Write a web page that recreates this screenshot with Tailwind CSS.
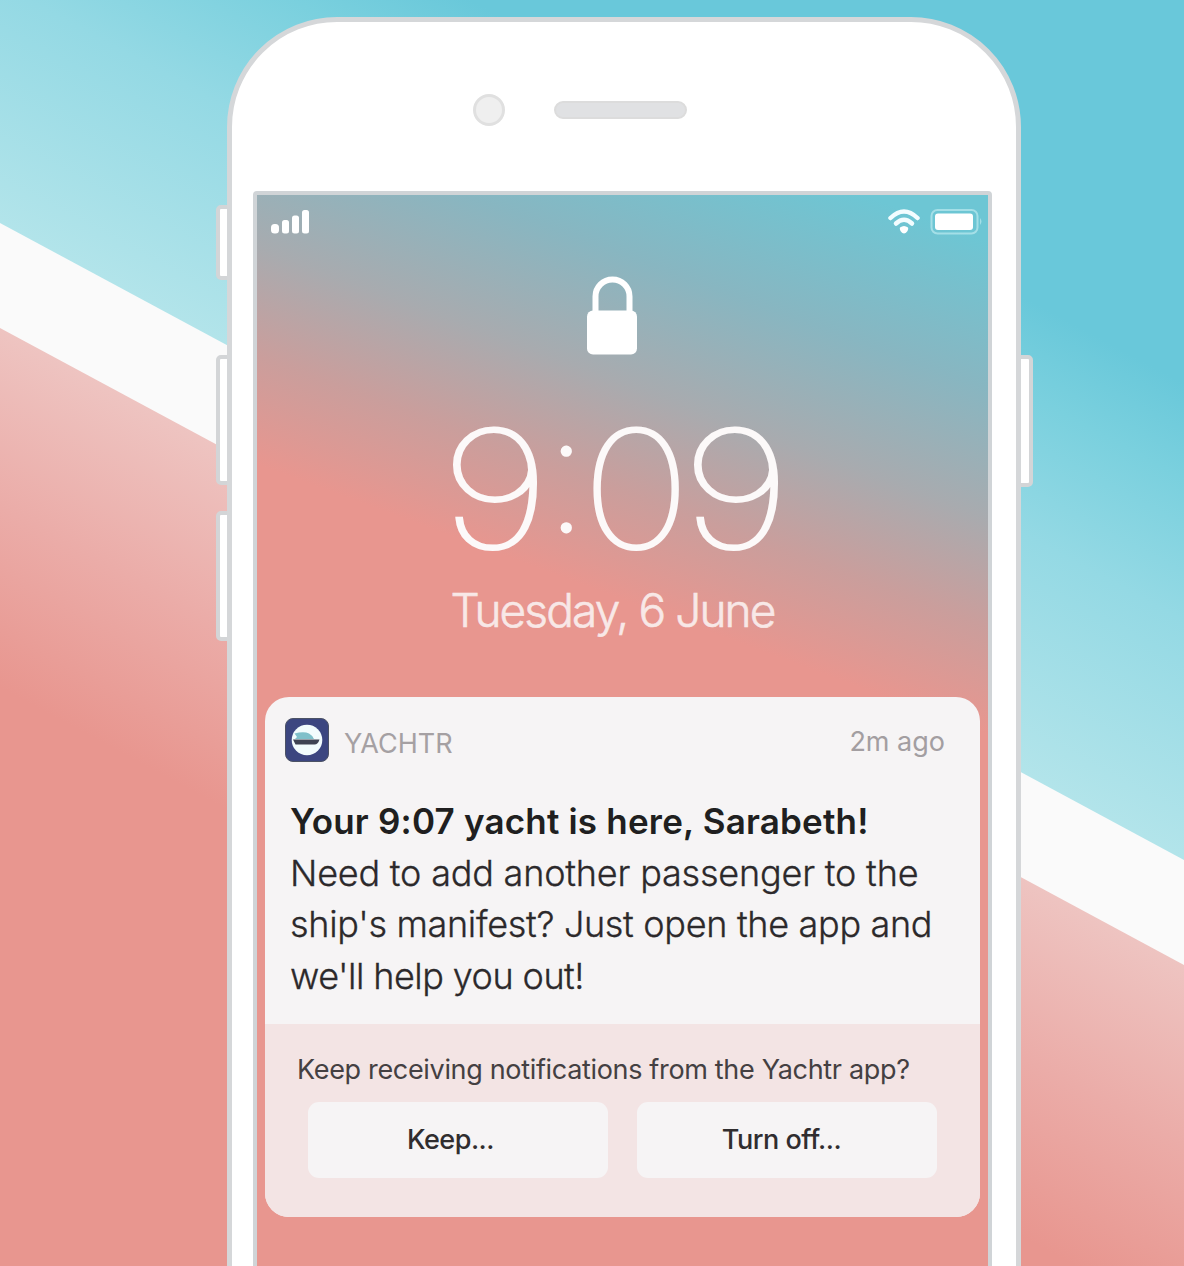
<!DOCTYPE html>
<html lang="en">
<head>
<meta charset="utf-8">
<title>Yachtr notification</title>
<script src="https://cdn.jsdelivr.net/npm/@tailwindcss/browser@4"></script>
</head>
<body class="font-['Inter','Liberation_Sans',sans-serif]">
<main class="relative h-[1266px] w-[1184px] overflow-hidden bg-[#fafafa]">
  <!-- diagonal backdrop -->
  <svg class="absolute inset-0" width="1184" height="1266" viewBox="0 0 1184 1266">
    <defs>
      <linearGradient id="sea" gradientUnits="userSpaceOnUse" x1="0" y1="223" x2="198" y2="-146">
        <stop offset="0" stop-color="#b2e4ea"/><stop offset=".5" stop-color="#94d9e4"/><stop offset=".8" stop-color="#7ad0de"/><stop offset="1" stop-color="#69c8da"/>
      </linearGradient>
      <linearGradient id="coral" gradientUnits="userSpaceOnUse" x1="0" y1="328" x2="-150" y2="607">
        <stop offset="0" stop-color="#eec4c1"/><stop offset=".5" stop-color="#ebaca8"/><stop offset="1" stop-color="#e8968f"/>
      </linearGradient>
    </defs>
    <path d="M0 0H1184V860L0 223Z" fill="url(#sea)"/>
    <path d="M0 328L1184 965V1266H0Z" fill="url(#coral)"/>
  </svg>

  <!-- side keys -->
  <i class="absolute left-[216px] top-[205px] h-[75px] w-[16px] rounded-[5px] border-4 border-[#d3d5d7] bg-white"></i>
  <i class="absolute left-[216px] top-[355px] h-[130px] w-[16px] rounded-[5px] border-4 border-[#d3d5d7] bg-white"></i>
  <i class="absolute left-[216px] top-[511px] h-[130px] w-[16px] rounded-[5px] border-4 border-[#d3d5d7] bg-white"></i>
  <i class="absolute left-[1016px] top-[355px] h-[132px] w-[17px] rounded-[5px] border-4 border-[#d3d5d7] bg-white"></i>

  <div class="relative ml-[227px] mt-[17px] flex h-[1400px] w-[794px] flex-col items-center rounded-t-[110px] border-[5px] border-[#d5d7d9] bg-white">
    <div class="flex h-[169px] w-full items-center pl-[241px] pt-[7px]">
      <span class="size-[32px] rounded-full border-[3px] border-[#e0e0e0] bg-[#efefef]"></span>
      <span class="ml-[49px] h-[18px] w-[133px] rounded-full border-2 border-[#dcdcdc] bg-[#e0e1e3]"></span>
    </div>

    <section class="relative -ml-[3px] w-[739px] flex-1 overflow-hidden rounded-t-[4px] border-4 border-[#d0d4d7] bg-[#e8968f]">
      <svg class="absolute inset-0" width="731" height="1080" viewBox="257 195 731 1080">
        <defs><linearGradient id="wall" gradientUnits="userSpaceOnUse" x1="257" y1="-30" x2="96" y2="405">
          <stop offset="0" stop-color="#6dc6d4"/><stop offset=".3" stop-color="#88b6c1"/><stop offset=".56" stop-color="#a8abaf"/><stop offset=".78" stop-color="#ca9e9c"/><stop offset="1" stop-color="#e8968f"/>
        </linearGradient></defs>
        <rect x="257" y="195" width="731" height="1080" fill="url(#wall)"/>
      </svg>

      <div class="relative flex h-full flex-col items-center">
        <header class="flex h-[53px] w-full items-center pl-[14px] pr-[5px]">
          <svg width="39" height="26" viewBox="0 0 39 26" fill="#fff"><rect x="0" y="15" width="8" height="9.500" rx="3.500"/><rect x="11" y="11" width="7" height="13.500" rx="2.500"/><rect x="21" y="6.500" width="7" height="18" rx="2.500"/><rect x="31" y="1" width="7" height="23.500" rx="2.500"/></svg>
          <svg class="ml-auto" width="34" height="26" viewBox="0 0 34 26" fill="none" stroke="#f3fdff" stroke-width="4.500" stroke-linecap="round"><path d="M3.500 9Q17-4 30.500 9"/><path d="M9 14.500Q17 7 25 14.500"/><path d="M13 18.500Q17 15.500 21 18.500C22 21 19 24.500 17 24.500S12 21 13 18.500Z" fill="#fff" stroke="none"/></svg>
          <svg class="ml-[9px]" width="53" height="28" viewBox="0 0 53 28"><rect x="1.500" y="2" width="46" height="23.500" rx="6" fill="none" stroke="#a4dfe7" stroke-width="2"/><rect x="5" y="5.500" width="38" height="16.500" rx="3" fill="#fff"/><path d="M50 10Q53 13.500 50 17Z" fill="#a4dfe7"/></svg>
        </header>
        <svg class="mt-[28px] -ml-[21px]" width="52" height="80" viewBox="0 0 52 80"><path d="M9.500 38V20.500a17 17 0 0 1 34 0V38" fill="none" stroke="#fff" stroke-width="6"/><rect x="1" y="34.500" width="50" height="44" rx="6" fill="#fff"/></svg>
        <h1 class="-ml-[16px] mt-[64px] flex h-[138px] items-center whitespace-nowrap text-[163px] font-thin leading-[130px] text-[#fcf9f9] [-webkit-text-stroke:2.8px_#fcf9f9]"><span class="-translate-x-[3px] scale-x-[1.18]">9</span><span class="-translate-y-[17px]">:</span><span class="scale-x-[1.13]">0</span><span class="translate-x-[5px] scale-x-[1.18]">9</span></h1>
        <p class="-ml-[20px] mt-[24px] whitespace-nowrap text-[46px] font-light leading-[56px] tracking-[-1.9px] text-[#f8e8e7] [-webkit-text-stroke:0.6px_#f8e8e7]">Tuesday, 6 June</p>

        <article class="absolute left-[8px] top-[502px] w-[715px] overflow-hidden rounded-[24px] bg-[#f6f4f5]">
          <div class="h-[327px] pl-[20px] pr-[35px] pt-[21px]">
            <div class="flex h-[44px] items-center">
              <svg width="44" height="44" viewBox="0 0 44 44"><rect x=".5" y=".5" width="43" height="43" rx="7.500" fill="#3c4680" stroke="#4c5265"/><circle cx="22" cy="22" r="15.300" fill="#f2fcfd"/><path d="M10 21L12 19 9.500 15.500Q19 13 24 15.500 27 17 29 21Z" fill="#7fc0ca"/><path d="M8 21.500H34.500Q33 26.500 29.500 26.500H10.500Z" fill="#3e4353"/></svg>
              <span class="ml-[15px] mt-[8px] text-[27px] leading-[32px] text-[#a5a0a3]">YACHTR</span>
              <span class="ml-auto mt-[3px] text-[27px] leading-[32px] text-[#a39ea1]">2m ago</span>
            </div>
            <div class="-mr-6 ml-[5px] mt-[34px] whitespace-nowrap text-[36px] font-light leading-[51.500px] text-[#2c292b]">
              <h2 class="text-[35px] font-semibold tracking-[0.2px] text-[#201f20]">Your 9:07 yacht is here, Sarabeth!</h2>
              <p class="[-webkit-text-stroke:0.3px_#2c292b]"><span class="tracking-[-0.2px]">Need to add another passenger to the</span><br><span class="tracking-[-0.32px]">ship's manifest? Just open the app and</span><br><span class="tracking-[-0.55px]">we'll help you out!</span></p>
            </div>
          </div>
          <div class="h-[193px] bg-[#f3e4e4] px-[32px] pt-[30px] text-[27px] leading-[32px] text-[#444042]">
            <p class="whitespace-nowrap tracking-[-0.33px]">Keep receiving notifications from the Yachtr app?</p>
            <div class="mt-[16px] flex justify-between pl-[11px] pr-[11px] font-medium tracking-[-0.5px] text-[#302d2f]">
              <button class="h-[76px] w-[300px] rounded-[11px] bg-[#f6f4f5] pr-[15px]">Keep...</button>
              <button class="h-[76px] w-[300px] rounded-[11px] bg-[#f6f4f5] pr-[11px]">Turn off...</button>
            </div>
          </div>
        </article>
      </div>
    </section>
  </div>
</main>
</body>
</html>
